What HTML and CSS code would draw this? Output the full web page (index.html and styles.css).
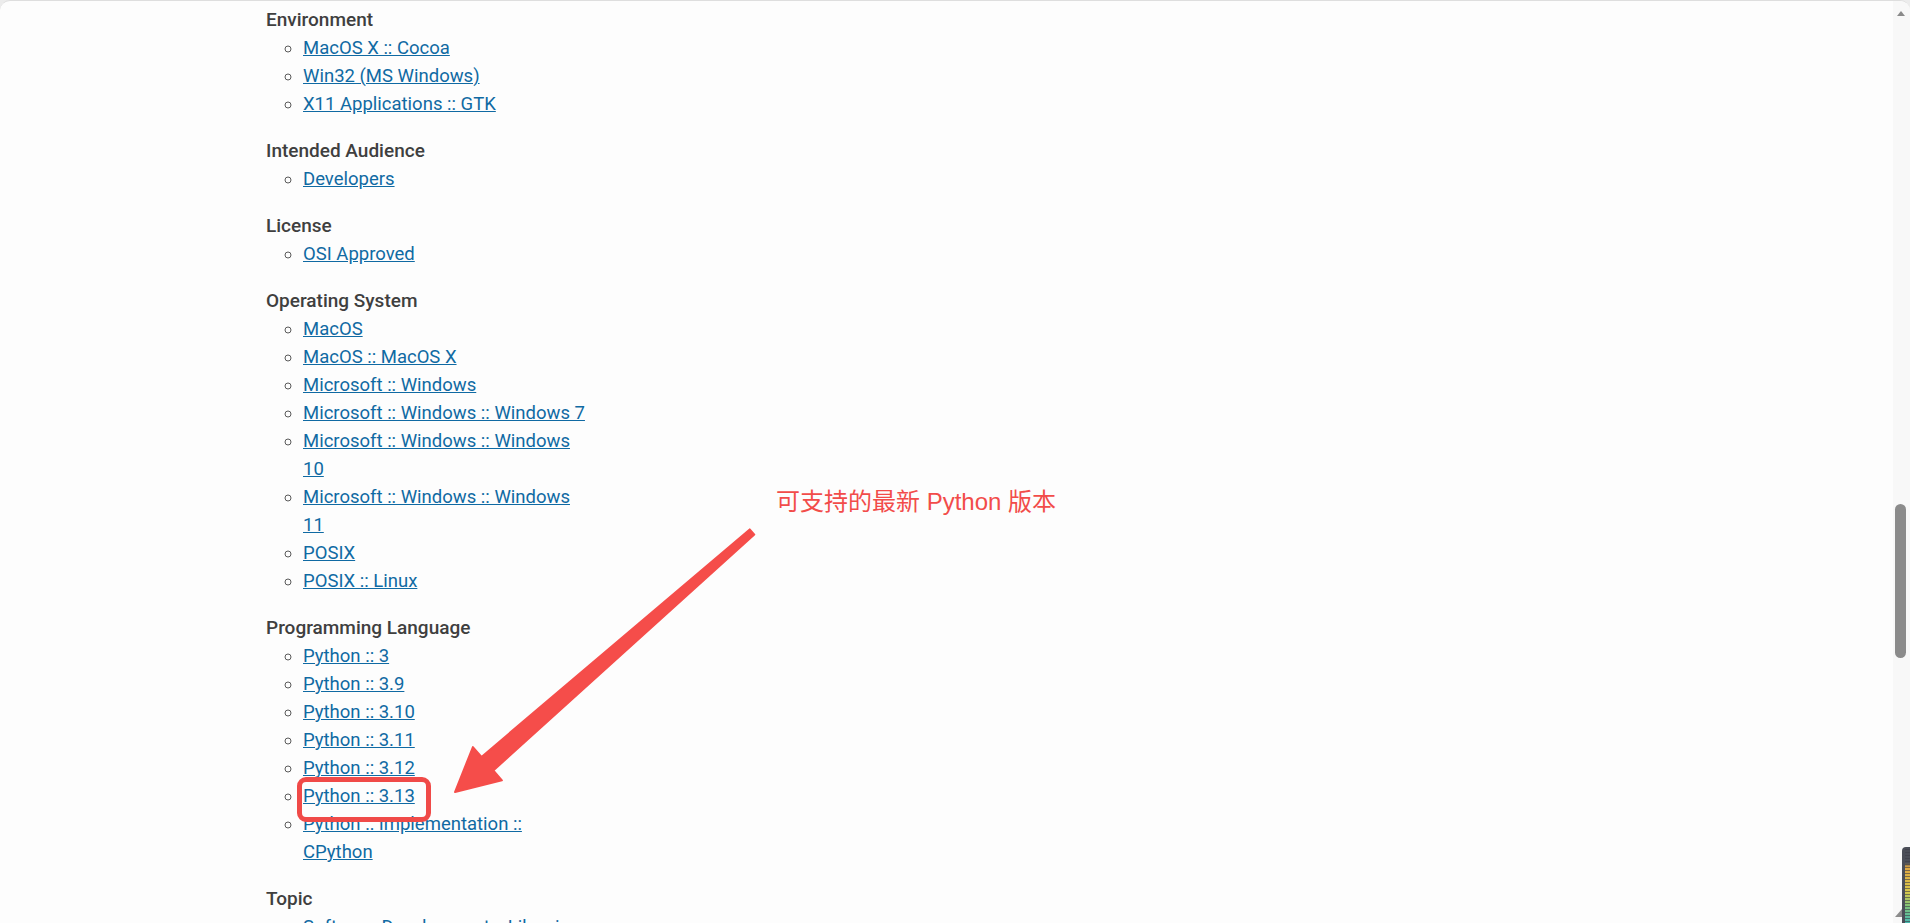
FILE: index.html
```html
<!DOCTYPE html>
<html lang="en">
<head>
  <meta charset="UTF-8">
  <meta name="viewport" content="width=device-width, initial-scale=1.0">
  <title>Classifiers</title>
  <link rel="stylesheet" href="styles.css">
</head>
<body>
  <div class="window">
    <main class="page">
      <div class="classifiers">
        <section class="group">
          <h3>Environment</h3>
          <ul>
            <li><a href="#">MacOS X :: Cocoa</a></li>
            <li><a href="#">Win32 (MS Windows)</a></li>
            <li><a href="#">X11 Applications :: GTK</a></li>
          </ul>
        </section>

        <section class="group">
          <h3>Intended Audience</h3>
          <ul>
            <li><a href="#">Developers</a></li>
          </ul>
        </section>

        <section class="group">
          <h3>License</h3>
          <ul>
            <li><a href="#">OSI Approved</a></li>
          </ul>
        </section>

        <section class="group">
          <h3>Operating System</h3>
          <ul>
            <li><a href="#">MacOS</a></li>
            <li><a href="#">MacOS :: MacOS X</a></li>
            <li><a href="#">Microsoft :: Windows</a></li>
            <li><a href="#">Microsoft :: Windows :: Windows 7</a></li>
            <li><a href="#">Microsoft :: Windows :: Windows 10</a></li>
            <li><a href="#">Microsoft :: Windows :: Windows 11</a></li>
            <li><a href="#">POSIX</a></li>
            <li><a href="#">POSIX :: Linux</a></li>
          </ul>
        </section>

        <section class="group">
          <h3>Programming Language</h3>
          <ul>
            <li><a href="#">Python :: 3</a></li>
            <li><a href="#">Python :: 3.9</a></li>
            <li><a href="#">Python :: 3.10</a></li>
            <li><a href="#">Python :: 3.11</a></li>
            <li><a href="#">Python :: 3.12</a></li>
            <li class="marked"><a href="#">Python :: 3.13</a></li>
            <li><a href="#">Python :: Implementation :: CPython</a></li>
          </ul>
        </section>

        <section class="group">
          <h3>Topic</h3>
          <ul>
            <li><a href="#">Software Development :: Libraries</a></li>
          </ul>
        </section>
      </div>

      <!-- annotation drawn over the page -->
      <div class="note">可支持的最新 Python 版本</div>
    </main>

    <svg class="arrow" width="1910" height="923" viewBox="0 0 1910 923">
      <polygon points="749.7,529.4 481.5,756.9 472.9,747.1 455,792 501.9,780.3 493.3,770.5 754.3,534.6"
               fill="#f54d4a" stroke="#f54d4a" stroke-width="2" stroke-linejoin="round"/>
    </svg>

    <div class="scrollbar">
      <span class="scroll-up"></span>
      <span class="scroll-thumb"></span>
    </div>

    <div class="meter"><span class="meter-tab"></span></div>
  </div>
</body>
</html>
```

FILE: styles.css
```css
* {
  box-sizing: border-box;
}

html, body {
  height: 100%;
}

body {
  margin: 0;
  background-color: #ececec;
  font-family: Roboto, 'Noto Sans', sans-serif;
  color: #464646;
}

.window {
  position: relative;
  display: flex;
  height: 100vh;
  overflow: hidden;
  background-color: #fdfdfd;
  border-top: 1px solid #dedede;
  border-radius: 10px 10px 0 0;
}

.page {
  position: relative;
  flex: 1;
  padding: 5px 0 0 266px;
}

/* Classifier list */
.classifiers {
  width: 321px;
}

.group h3 {
  margin: 0;
  font-size: 19px;
  font-weight: 500;
  line-height: 28px;
  color: #3f3f3f;
}

.group ul {
  margin: 0 0 19px 0;
  padding-left: 37px;
  list-style-type: circle;
}

.group li {
  font-size: 18.5px;
  line-height: 28px;
  color: #5a5a5a;
}

.group a {
  color: #106aa3;
  text-decoration: underline;
}

.marked {
  position: relative;
}

.marked::after {
  content: '';
  position: absolute;
  left: -6px;
  top: -5px;
  width: 124px;
  height: 35px;
  border: 5.5px solid #f04a48;
  border-radius: 9px;
}

/* Red annotation */
.note {
  position: absolute;
  left: 776px;
  top: 489px;
  font-family: 'Liberation Sans', 'Noto Sans CJK SC', sans-serif;
  font-size: 24px;
  line-height: 24px;
  color: #f24c4a;
  white-space: nowrap;
}

.arrow {
  position: absolute;
  left: 0;
  top: -1px;
  pointer-events: none;
}

/* Scrollbar */
.scrollbar {
  width: 17px;
  background-color: #f8f8f8;
  display: flex;
  flex-direction: column;
  align-items: center;
  padding-top: 10px;
}

.scroll-up {
  width: 0;
  height: 0;
  border-left: 4px solid transparent;
  border-right: 4px solid transparent;
  border-bottom: 5px solid #8a8a8a;
  margin-right: 2px;
}

.scroll-thumb {
  width: 11px;
  height: 154px;
  margin-top: 488px;
  margin-right: 2px;
  background-color: #8b8b8b;
  border-radius: 6px;
}

/* Corner widget */
.meter {
  position: absolute;
  right: 0;
  bottom: 0;
  width: 8px;
  height: 76px;
  border-radius: 4px 0 0 0;
  background:
    repeating-linear-gradient(to bottom, transparent 0 2px, rgba(60, 60, 70, 0.6) 2px 3px),
    linear-gradient(to bottom, #4b4e58 0 16px, #e0a642 20px, #d8c84a 45px, #7cc27c 60px, #48b8b0 76px);
  border-left: 3px solid #4b4e58;
}

.meter-tab {
  position: absolute;
  left: -10px;
  bottom: 6px;
  width: 7px;
  height: 8px;
  background-color: #8c8c8c;
  clip-path: polygon(100% 0, 100% 100%, 0 100%);
}
```
